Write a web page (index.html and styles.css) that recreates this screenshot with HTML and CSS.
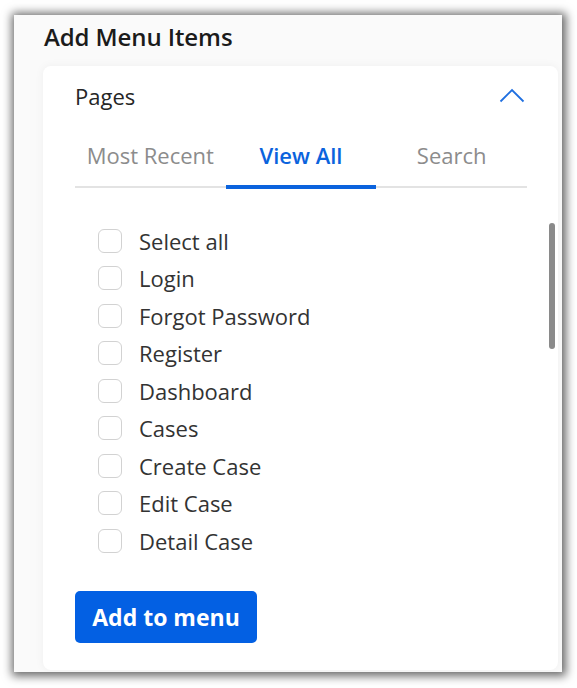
FILE: index.html
```html
<!DOCTYPE html>
<html lang="en">
<head>
<meta charset="utf-8">
<title>Add Menu Items</title>
<link rel="stylesheet" href="styles.css">
</head>
<body>
<div class="window">
  <h2 class="title">Add Menu Items</h2>
  <section class="card">
    <div class="card-header">
      <span class="card-title">Pages</span>
      <svg class="chevron" width="26" height="15" viewBox="0 0 26 15" aria-hidden="true">
        <polyline points="1.5,13.5 13,2 24.5,13.5" fill="none" stroke="#1f6fe0" stroke-width="1.8"/>
      </svg>
    </div>
    <div class="tabs">
      <div class="tab">Most Recent</div>
      <div class="tab active">View All</div>
      <div class="tab">Search</div>
    </div>
    <div class="list-wrap">
      <ul class="list">
        <li class="row"><span class="box"></span><span>Select all</span></li>
        <li class="row"><span class="box"></span><span>Login</span></li>
        <li class="row"><span class="box"></span><span>Forgot Password</span></li>
        <li class="row"><span class="box"></span><span>Register</span></li>
        <li class="row"><span class="box"></span><span>Dashboard</span></li>
        <li class="row"><span class="box"></span><span>Cases</span></li>
        <li class="row"><span class="box"></span><span>Create Case</span></li>
        <li class="row"><span class="box"></span><span>Edit Case</span></li>
        <li class="row"><span class="box"></span><span>Detail Case</span></li>
      </ul>
      <div class="thumb"></div>
    </div>
    <button class="btn">Add to menu</button>
  </section>
</div>
</body>
</html>
```

FILE: styles.css
```css
html, body {
  margin: 0;
  padding: 0;
  background: #ffffff;
}
body {
  width: 577px;
  height: 688px;
  overflow: hidden;
  font-family: "Open Sans", "Noto Sans", sans-serif;
}
.window {
  margin: 15px 0 0 14px;
  width: 548px;
  height: 657px;
  background: #fafafa;
  box-shadow: 1px 1px 9px 3px rgba(0, 0, 0, 0.6);
  box-sizing: border-box;
  padding: 0 4px 0 29px;
  overflow: hidden;
}
.title {
  margin: 0;
  padding: 7px 0 0 1px;
  height: 43px;
  box-sizing: border-box;
  font-size: 24px;
  line-height: 30px;
  font-weight: 600;
  color: #1b1b1b;
  letter-spacing: -0.1px;
}
.card {
  position: relative;
  background: #ffffff;
  border-radius: 8px;
  box-shadow: 0 0 10px rgba(0, 0, 0, 0.05);
  height: 604px;
  margin-top: 8px;
  padding: 16px 31px 0 32px;
  box-sizing: border-box;
}
.card-header {
  display: flex;
  justify-content: space-between;
  align-items: center;
  height: 28px;
}
.card-title {
  font-size: 22px;
  line-height: 28px;
  color: #262626;
}
.chevron {
  margin-right: 2px;
  margin-bottom: 1px;
}
.tabs {
  margin-top: 31px;
  display: grid;
  grid-template-columns: repeat(3, 1fr);
  border-bottom: 2px solid #e3e3e3;
}
.tab {
  text-align: center;
  font-size: 22px;
  line-height: 28px;
  padding-bottom: 16px;
  color: #8c8c8c;
  border-bottom: 4px solid transparent;
  margin-bottom: -3px;
}
.tab.active {
  color: #0b63dd;
  font-weight: 600;
  border-bottom-color: #0b63dd;
}
.list-wrap {
  position: relative;
}
.list {
  list-style: none;
  margin: 34px 0 0 0;
  padding: 0 0 0 23px;
}
.row {
  display: flex;
  align-items: center;
  gap: 17px;
  height: 37.5px;
  font-size: 22px;
  color: #333333;
}
.box {
  width: 24px;
  height: 24px;
  box-sizing: border-box;
  border: 1.5px solid #d2d2d2;
  border-radius: 6px;
  flex: none;
}
.thumb {
  position: absolute;
  top: 1px;
  right: -28px;
  width: 6px;
  height: 126px;
  border-radius: 3px;
  background: #8a8a8a;
}
.btn {
  display: block;
  margin-top: 31px;
  width: 182px;
  height: 52px;
  border: none;
  border-radius: 5px;
  background: #0360e3;
  color: #ffffff;
  font-family: "Open Sans", "Noto Sans", sans-serif;
  font-size: 23px;
  font-weight: 700;
  padding: 0;
}
```
